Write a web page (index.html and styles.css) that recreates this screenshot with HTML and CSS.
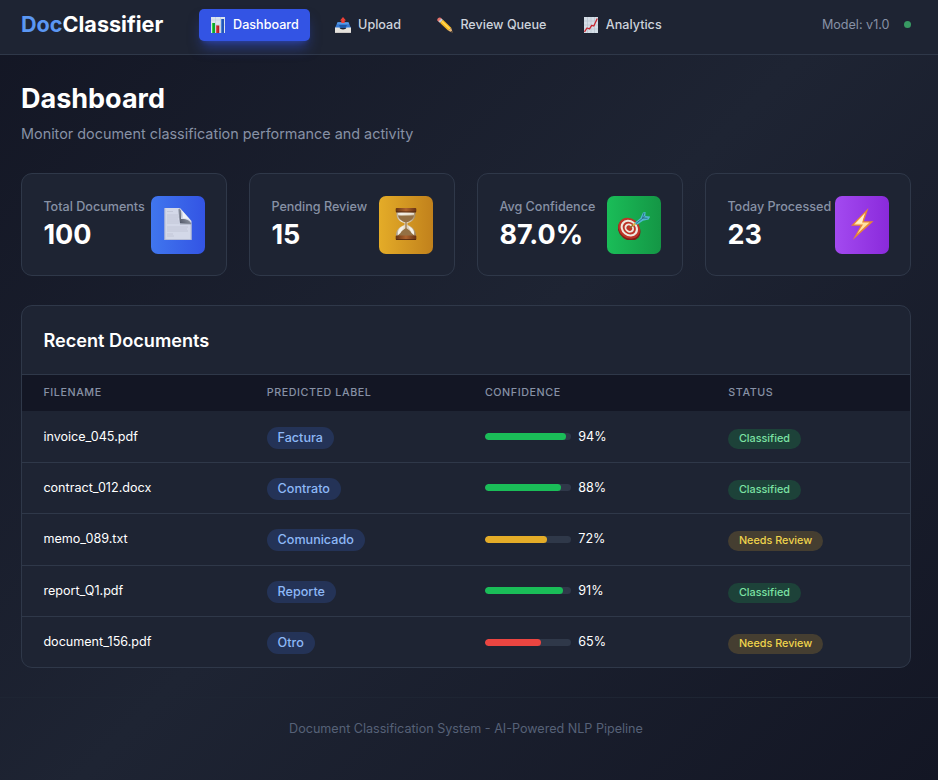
FILE: index.html
```html
<!DOCTYPE html>
<html lang="en">
<head>
<meta charset="utf-8">
<title>DocClassifier</title>
<link rel="stylesheet" href="styles.css">
</head>
<body>
<header class="topbar">
  <div class="brand"><span>Doc</span>Classifier</div>
  <nav class="nav">
    <a class="link active"><svg viewBox="0 0 16 16"><path fill="#dbe4ef" d="M1 0h14v16H1z"/><path stroke="#b9c6d8" stroke-width=".5" d="M1 3h14M1 8h14M5.5 0v16M10.500 0v16"/><path fill="#10a52c" d="M2 6h3v10H2z"/><path fill="#35d04b" d="M2 6h1v10H2z"/><path fill="#b71c24" d="M6.300 8.500h3V16h-3z"/><path fill="#e24a4a" d="M6.300 8.500h1V16h-1z"/><path fill="#2456b8" d="M11 2h3v14h-3z"/><path fill="#477dd5" d="M11 2h1v14h-1z"/></svg>Dashboard</a>
    <a class="link"><svg viewBox="0 0 16 16"><path fill="#3478d3" d="M2.600 5.300h10.800L16 11H0z"/><path fill="#5799e5" d="M2.600 5.300h10.800l1 2H1.600z"/><path fill="#1d57a8" d="M4 8h8l-1.500 3h-5z"/><path fill="#e5e2dd" d="M0 10.500h4.500c.5 1.400 1.700 1.900 3.500 1.900s3-.5 3.500-1.900H16V16H0z"/><path fill="#c4c1bd" d="M0 15.300h16v.7H0z"/><path fill="#ed4036" d="M8 0l3 3.500H9.700V6H6.300V3.500H5z"/></svg>Upload</a>
    <a class="link"><svg viewBox="0 0 16 16"><path fill="#e5746d" d="M.4 3.400C-.3 1.800 1.500 0 3.300.5l2 1.800L2.400 5.500z"/><path fill="#c9ced3" d="M4.400 1.400l1.700 1.500L3.200 6 1.500 4.500z"/><path fill="#f5b922" d="M6 2.800l8.200 7.900-2.900 3L3.100 6z"/><path fill="#ffdc59" d="M5.200 3.700l8.200 7.900-.9.900L4.200 4.700z"/><path fill="#e8b77b" d="M14.200 10.700l1.500 5-4.400-2z"/><path fill="#38322e" d="M15.100 13.700l.9 2.300-2.500-1z"/></svg>Review Queue</a>
    <a class="link"><svg viewBox="0 0 16 16"><path fill="#d5dee7" d="M1 0h14v16H1z"/><path stroke="#acbac7" stroke-width=".5" d="M1 4h14M1 8h14M1 12h14M4.500 0v16M8 0v16M11.500 0v16"/><path fill="none" stroke="#c7232c" stroke-width="1.300" stroke-linejoin="round" d="M1.500 14.800L4 11l2.500.8 2.200-3.500 2.100.7 3.500-7.500"/></svg>Analytics</a>
  </nav>
  <div class="model">Model: v1.0<span class="dot"></span></div>
</header>
<main class="main">
  <h1>Dashboard</h1>
  <p class="sub">Monitor document classification performance and activity</p>
  <section class="stats">
    <div class="card"><div><div class="label">Total Documents</div><div class="value">100</div></div><div class="icon blue">
      <svg viewBox="0 0 32 32"><defs><linearGradient id="fold" x1="0" y1="1" x2="1" y2="0"><stop stop-color="#4a5060"/><stop offset=".5" stop-color="#858b98"/><stop offset="1" stop-color="#e9edf4"/></linearGradient></defs><path fill="#d3d8e8" d="M2.500 0H18l11.500 13v19h-27z"/><path fill="none" stroke="#a8b1cd" stroke-width=".8" d="M2.900.4V31.600h26.200V16"/><path fill="#a0a6b6" d="M16 1l3 1v11l10 2v1.500H18z"/><path fill="url(#fold)" d="M17 0c3 3 2.500 6 2 11 4 0 8 0 10.500 5L18 15z"/><path fill="#f0f2f7" d="M18 .3L29 13c-2-2.300-5-2.700-8-2.800.3-4-.2-7-3-9.900z"/><path stroke="#bfc5d6" stroke-width=".9" d="M5 3.500h6M5 7h11M5 9h12M5 11h11M5 13h12M5 15h12M5 19h21M5 21h20M5 23h21M5 26h6M5 28h7"/></svg></div></div>
    <div class="card"><div><div class="label">Pending Review</div><div class="value">15</div></div><div class="icon yellow">
      <svg viewBox="0 0 32 32"><defs><linearGradient id="wood"><stop stop-color="#673512"/><stop offset=".5" stop-color="#ad622e"/><stop offset="1" stop-color="#653113"/></linearGradient><linearGradient id="glass"><stop stop-color="#aa9b84"/><stop offset=".25" stop-color="#eee9df"/><stop offset=".7" stop-color="#d7c8ae"/><stop offset="1" stop-color="#9a7f58"/></linearGradient></defs><path fill="url(#glass)" d="M6.500 4h19c.5 7-3 9.500-8 11v2c5 2 8.800 5 8.500 11H6c-.3-6 3.500-9 8.500-11v-2c-5-1.500-8.500-4-8-11z"/><path fill="#947044" d="M8 7.500h16c-1 4-4 6-7.400 6.800v6l5.400 4.200 2.500 3.500h-17l2.500-3.500 5.400-4.200v-6C12 13.500 9 11.500 8 7.500z"/><path fill="#f4f1e9" d="M8 24c.5-3 3-5 6-6l-3.500 7L8 27zM24 24c-.5-3-3-5-6-6l3.500 7 2.500 2zM8 5.200h16v1.300H8z"/><rect x="5.700" width="20.600" height="4.300" rx="1" fill="url(#wood)"/><rect x="5.700" y="27.400" width="20.600" height="4.600" rx="1" fill="url(#wood)"/><path stroke="#4c260f" stroke-width=".8" d="M6 3.900h20M6 31.500h20"/></svg></div></div>
    <div class="card"><div><div class="label">Avg Confidence</div><div class="value">87.0%</div></div><div class="icon green">
      <svg viewBox="0 0 32 32"><g transform="rotate(38 11 20.500)"><ellipse cx="12" cy="21.500" rx="12" ry="10" fill="#7f211a"/><ellipse cx="11" cy="20.200" rx="11.500" ry="9.800" fill="#bd3427"/><ellipse cx="11" cy="20" rx="9.200" ry="7.800" fill="#eee9df"/><ellipse cx="11" cy="20" rx="7" ry="5.900" fill="#bd3427"/><ellipse cx="11" cy="20" rx="5" ry="4.200" fill="#eee9df"/><ellipse cx="11" cy="20" rx="3" ry="2.500" fill="#bd3427"/></g><path stroke="#8b6d2d" stroke-width="1.500" d="M11.500 20L18 15"/><path stroke="#deb946" stroke-width="2" d="M15 17.500l3-2.500"/><path fill="#50b7d0" d="M16.500 15l6-5 2.500-5.500 2.600-.5-.3 4 5 .5-1.700 3-5.600 1.200-6 4z"/><path stroke="#286f87" stroke-width=".9" fill="none" d="M18 15.500l9-7M24.500 10l5 .3M24.500 10l1.500-5"/></svg></div></div>
    <div class="card"><div><div class="label">Today Processed</div><div class="value">23</div></div><div class="icon purple">
      <svg viewBox="0 0 32 32"><path fill="#e88735" d="M22.500 0L5 17.800h9.700L6.700 32 27.500 13.200H17.800z"/><path fill="#ffe0a0" d="M19.500 4.500L8 16.500h9L11 26l12.500-11.500h-8z"/><path fill="#fff0c8" d="M18.300 6.300L9.800 15.600l6.200-.4z"/></svg></div></div>
  </section>
  <section class="panel">
    <h2>Recent Documents</h2>
    <div class="row head"><div>Filename</div><div>Predicted Label</div><div>Confidence</div><div>Status</div></div>
    <div class="row"><div>invoice_045.pdf</div><div><span class="tag">Factura</span></div><div class="conf"><span class="bar"><b class="high" style="width:94%"></b></span>94%</div><div><span class="status ok">Classified</span></div></div>
    <div class="row"><div>contract_012.docx</div><div><span class="tag">Contrato</span></div><div class="conf"><span class="bar"><b class="high" style="width:88%"></b></span>88%</div><div><span class="status ok">Classified</span></div></div>
    <div class="row"><div>memo_089.txt</div><div><span class="tag">Comunicado</span></div><div class="conf"><span class="bar"><b class="mid" style="width:72%"></b></span>72%</div><div><span class="status review">Needs Review</span></div></div>
    <div class="row"><div>report_Q1.pdf</div><div><span class="tag">Reporte</span></div><div class="conf"><span class="bar"><b class="high" style="width:91%"></b></span>91%</div><div><span class="status ok">Classified</span></div></div>
    <div class="row"><div>document_156.pdf</div><div><span class="tag">Otro</span></div><div class="conf"><span class="bar"><b class="low" style="width:65%"></b></span>65%</div><div><span class="status review">Needs Review</span></div></div>
  </section>
</main>
<footer class="footer">Document Classification System - AI-Powered NLP Pipeline</footer>
</body>
</html>
```
FILE: styles.css
```css
* { box-sizing: border-box; margin: 0; padding: 0; }
html { background: #131624; }
body {
  height: 780px;
  font: 12.58px/18px Inter, sans-serif;
  color: #fff;
  background: linear-gradient(135deg, #131624 0%, #1e2433 50%, #131624 100%) no-repeat;
}
.topbar {
  height: 55px;
  padding: 0 27px 5px 21px;
  display: flex;
  align-items: center;
  background: #1e2433;
  border-bottom: 1px solid #2f3849;
}
.brand { width: 178px; padding-bottom: 2px; font-size: 21.6px; line-height: 28px; font-weight: 700; }
.brand span { color: #5b97f3; }
.nav { display: flex; gap: 14.5px; }
.link {
  display: flex;
  align-items: center;
  height: 32px;
  padding: 0 10.8px;
  border-radius: 5px;
  font-weight: 500;
  color: #cdd3dc;
}
.link svg { margin-right: 7.3px; width: 16px; height: 16px; }
.active {
  color: #fff;
  background: #3354e4;
  box-shadow: 0 9px 13px -3px #3354e480, 0 4px 5px -4px #3354e480;
}
.model { margin-left: auto; display: flex; align-items: center; color: #8791a5; }
.dot { width: 7px; height: 7px; margin-left: 14.5px; border-radius: 50%; background: #389a63; }
.main { padding: 28px 27px 0 21px; }
h1 { font-size: 27px; line-height: 32px; font-weight: 700; }
.sub { margin-top: 8.4px; font-size: 14.4px; line-height: 21px; color: #8791a5; }
.stats { margin-top: 29px; display: grid; grid-template-columns: repeat(4, 1fr); gap: 22px; }
.card {
  height: 103px;
  padding: 0 21.4px;
  display: flex;
  align-items: center;
  justify-content: space-between;
  white-space: nowrap;
  background: #1e2433;
  border: 1px solid #2f3849;
  border-radius: 11px;
}
.label { font-weight: 500; color: #8791a5; }
.value { margin-top: 3px; font-size: 27px; line-height: 32px; font-weight: 700; }
.icon {
  width: 54px;
  height: 58px;
  padding-bottom: 2px;
  display: flex;
  align-items: center;
  justify-content: center;
  border-radius: 7px;
}
.icon svg { width: 32px; height: 32px; }
.blue { background: linear-gradient(90deg, #4076ee, #3354e4); }
.yellow { background: linear-gradient(90deg, #e4ac28, #c1811c); }
.green { background: linear-gradient(90deg, #1abd58, #149645); }
.purple { background: linear-gradient(90deg, #a34af0, #8a2adb); }
.panel {
  margin-top: 29px;
  height: 363px;
  overflow: hidden;
  background: #1e2433;
  border: 1px solid #2f3849;
  border-radius: 11px;
}
h2 { height: 69px; padding-left: 21.4px; font-size: 18.15px; line-height: 69px; font-weight: 600; border-bottom: 1px solid #2f3849; }
.row {
  height: 51.4px;
  display: grid;
  grid-template-columns: 223.3px 218.2px 243.4px 1fr;
  align-items: center;
  border-top: 1px solid #2f3849;
}
.row > div { padding-left: 21.4px; }
.head + .row { border-top-color: transparent; margin-top: -1px; }
.head {
  height: 36px;
  border: 0;
  background: #131624;
  color: #8791a5;
  font-size: 10.75px;
  font-weight: 500;
  letter-spacing: .56px;
  text-transform: uppercase;
}
.head + .row { background: #1e2433 padding-box; }
.tag, .status { display: inline-block; border-radius: 20px; font-weight: 500; position: relative; }
.tag { top: 1px; padding: 2px 10.9px; color: #8db8f6; background: #243357; }
.status { top: 2px; padding: 2px 10.7px; line-height: 16px; font-size: 10.8px; }
.ok { color: #7ce3a4; background: #1d4239; }
.review { color: #f0d44c; background: #453e31; }
.conf { display: flex; align-items: center; }
.bar { width: 86px; height: 7px; margin-right: 7.4px; border-radius: 4px; background: #2f3849; overflow: hidden; }
.bar b { display: block; height: 100%; border-radius: 4px; }
.high { background: #1abd58; }
.mid { background: #e4ac28; }
.low { background: #eb4541; }
.footer {
  margin-top: 29px;
  height: 63px;
  padding: 22px 6px 0 0;
  text-align: center;
  color: #566177;
  border-top: 1px solid #1e2533;
}
```
